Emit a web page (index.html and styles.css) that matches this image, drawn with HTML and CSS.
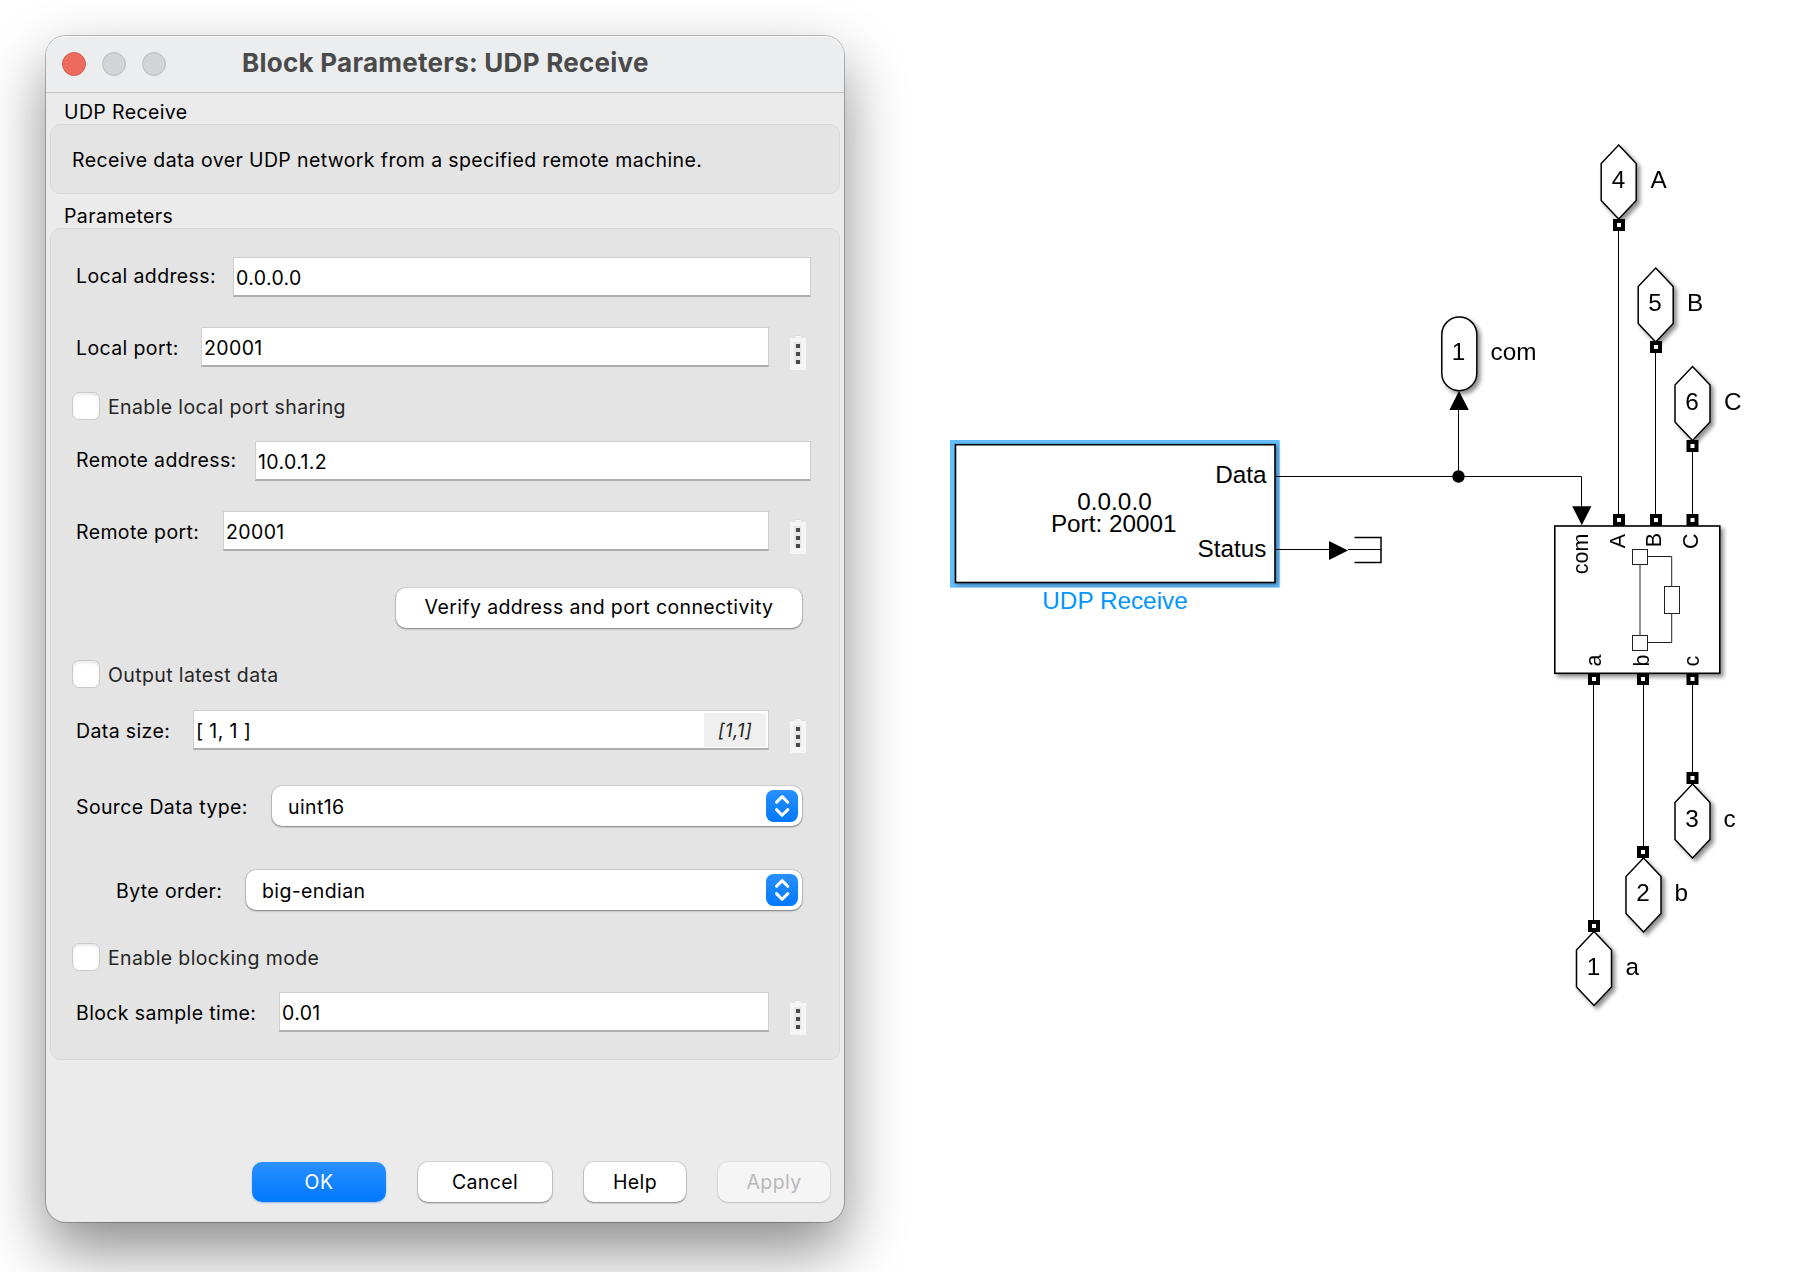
FILE: index.html
```html
<!DOCTYPE html>
<html lang="en">
<head>
<meta charset="utf-8">
<title>Block Parameters: UDP Receive</title>
<link rel="stylesheet" href="styles.css">
</head>
<body>
<svg class="defs" width="0" height="0" aria-hidden="true">
  <defs>
    <linearGradient id="blue" x1="0" y1="0" x2="0" y2="1">
      <stop offset="0" stop-color="#2a90ff"/><stop offset="1" stop-color="#0078ff"/>
    </linearGradient>
    <symbol id="stepper" viewBox="0 0 32 32">
      <rect width="32" height="32" rx="7.5" fill="url(#blue)"/>
      <path d="M10.5 12.3 16.1 6.6l5.7 5.7M10.5 19.6l5.6 5.7 5.7-5.7" fill="none" stroke="#fff" stroke-width="3" stroke-linecap="round" stroke-linejoin="round"/>
    </symbol>
    <symbol id="dots" viewBox="0 0 16 35">
      <path d="M3.5 3Q4.500 .7 6 .7h4Q11.500 .7 12.500 3z" fill="#fff" stroke="#ccc" stroke-width=".6"/>
      <rect y="3" width="16" height="32" fill="#f5f5f5"/>
      <path d="M4 7h7.500v22H4z" fill="#e6e6e6"/>
      <path d="M6 9h4v4H6zM6 17h4v4H6zM6 25h4v4H6z" fill="#474747"/>
    </symbol>
  </defs>
</svg>
<main class="desk">
  <section class="dialog">
    <header class="titlebar">
      <span class="light close"></span><span class="light"></span><span class="light"></span>
      <h1>Block Parameters: UDP Receive</h1>
    </header>
    <h2 class="heading first">UDP Receive</h2>
    <div class="group intro">Receive data over UDP network from a specified remote machine.</div>
    <h2 class="heading second">Parameters</h2>
    <div class="group params">
      <div class="row wide raised local-address"><label>Local address:</label><div class="input">0.0.0.0</div></div>
      <div class="row local-port"><label>Local port:</label><div class="input">20001</div><svg class="more"><use href="#dots"/></svg></div>
      <div class="check sharing"><span class="box"></span>Enable local port sharing</div>
      <div class="row wide raised remote-address"><label>Remote address:</label><div class="input">10.0.1.2</div></div>
      <div class="row remote-port"><label>Remote port:</label><div class="input">20001</div><svg class="more"><use href="#dots"/></svg></div>
      <div class="verify"><button class="button">Verify address and port connectivity</button></div>
      <div class="check latest"><span class="box"></span>Output latest data</div>
      <div class="row data-size"><label>Data size:</label><div class="input"><span>[ 1, 1 ]</span><em class="result">[1,1]</em></div><svg class="more"><use href="#dots"/></svg></div>
      <div class="row choice data-type"><label>Source Data type:</label><div class="select">uint16<svg><use href="#stepper"/></svg></div></div>
      <div class="row choice byte-order"><label>Byte order:</label><div class="select">big-endian<svg><use href="#stepper"/></svg></div></div>
      <div class="check blocking"><span class="box"></span>Enable blocking mode</div>
      <div class="row sample-time"><label>Block sample time:</label><div class="input">0.01</div><svg class="more"><use href="#dots"/></svg></div>
    </div>
    <footer class="actions">
      <button class="button primary">OK</button>
      <button class="button cancel">Cancel</button>
      <button class="button help">Help</button>
      <button class="button apply" disabled>Apply</button>
    </footer>
  </section>

  <svg class="diagram" viewBox="900 0 902 1272">
    <defs>
      <filter id="drop" x="-20%" y="-20%" width="150%" height="150%">
        <feDropShadow dx="3" dy="3" stdDeviation="2" flood-color="#000" flood-opacity=".45"/>
      </filter>
      <filter id="soft" x="-5%" y="-5%" width="110%" height="110%">
        <feDropShadow dx="2" dy="2" stdDeviation="2" flood-color="#000" flood-opacity=".35"/>
      </filter>
      <path id="hex" d="M0 .5 17.500 19v37L0 74.500-17.500 56V19z"/>
      <g id="port"><rect x="-6" y="-6" width="12" height="12" fill="#000"/><rect x="-2" y="-2" width="4" height="4" fill="#fff"/></g>
    </defs>

    <rect x="950" y="440" width="329.700" height="147.600" fill="#62bdff"/>
    <rect class="block" x="955.500" y="444.700" width="319.500" height="137.800" filter="url(#soft)"/>

    <g class="wire">
      <path d="M1276 476.500H1581.500V508M1458.500 476.500V408M1276 549.500H1330"/>
      <path d="M1618.500 231V516M1655.500 353V516M1692.500 452V516"/>
      <path d="M1593.500 683V922M1643.500 683V848M1692.500 683V774"/>
    </g>
    <circle cx="1458.500" cy="476.500" r="6.200"/>
    <path d="M1459 391l9.800 19h-19.400zM1572.200 506.200h19.200l-9.600 19zM1329 541v19l19-9.500z"/>
    <path class="terminator" d="M1354.500 537.500H1381V562.500H1354.500"/>
    <path class="wire" d="M1348 549.500H1381"/>

    <g class="label">
      <text x="1266.500" y="483" text-anchor="end">Data</text>
      <text x="1114.500" y="510" text-anchor="middle">0.0.0.0<tspan x="1113.700" y="532">Port: 20001</tspan></text>
      <text x="1266.500" y="557" text-anchor="end">Status</text>
      <text class="selected" x="1115" y="609" text-anchor="middle">UDP Receive</text>
    </g>

    <rect class="shape" x="1441.800" y="317" width="35" height="73.700" rx="17.500" filter="url(#drop)"/>
    <rect class="block" x="1554.800" y="526" width="165" height="147.300" filter="url(#drop)"/>
    <g class="mask">
      <path d="M1640 564V636M1647 556.500H1671.700V587M1671.700 613V642.500H1647"/>
      <rect x="1632.500" y="549.500" width="15" height="15"/>
      <rect x="1632.500" y="635.500" width="15" height="15"/>
      <rect x="1664.500" y="586.500" width="15" height="27"/>
    </g>

    <g class="shape" filter="url(#drop)">
      <use href="#hex" x="1618.700" y="144.500"/>
      <use href="#hex" x="1655.700" y="267.500"/>
      <use href="#hex" x="1692.500" y="366"/>
      <use href="#hex" x="1692.500" y="783.500"/>
      <use href="#hex" x="1643.500" y="857.500"/>
      <use href="#hex" x="1594" y="931"/>
    </g>
    <use href="#port" x="1619" y="225"/>
    <use href="#port" x="1656" y="347"/>
    <use href="#port" x="1692.500" y="446"/>
    <use href="#port" x="1619" y="520"/>
    <use href="#port" x="1656" y="520"/>
    <use href="#port" x="1692.500" y="520"/>
    <use href="#port" x="1594" y="679"/>
    <use href="#port" x="1643" y="679"/>
    <use href="#port" x="1692.500" y="679"/>
    <use href="#port" x="1692.500" y="778"/>
    <use href="#port" x="1643" y="852"/>
    <use href="#port" x="1594" y="926"/>

    <g class="label number">
      <text x="1458.500" y="360">1</text>
      <text x="1618.500" y="188">4</text>
      <text x="1655" y="311">5</text>
      <text x="1692" y="409.500">6</text>
      <text x="1692" y="827">3</text>
      <text x="1643" y="901">2</text>
      <text x="1593.500" y="974.500">1</text>
    </g>
    <g class="label">
      <text x="1490.500" y="360">com</text>
      <text x="1650.500" y="188">A</text>
      <text x="1687" y="311">B</text>
      <text x="1724" y="409.500">C</text>
      <text x="1723.500" y="827">c</text>
      <text x="1674.500" y="901">b</text>
      <text x="1625.500" y="975">a</text>
    </g>
    <g class="pin">
      <text transform="translate(1587.500 533.500) rotate(-90)" text-anchor="end">com</text>
      <text transform="translate(1625 534) rotate(-90)" text-anchor="end">A</text>
      <text transform="translate(1661 533) rotate(-90)" text-anchor="end">B</text>
      <text transform="translate(1698 533.500) rotate(-90)" text-anchor="end">C</text>
      <text transform="translate(1600.500 666.500) rotate(-90)">a</text>
      <text transform="translate(1648.800 666.500) rotate(-90)">b</text>
      <text transform="translate(1698.500 666.500) rotate(-90)">c</text>
    </g>
  </svg>
</main>
</body>
</html>
```
FILE: styles.css
```css
* { box-sizing: border-box; }

body {
  margin: 0;
  background: #fff;
  color: #000;
  font: 19.5px/24px Inter, "Liberation Sans", sans-serif;
  letter-spacing: 0.38px;
}

.defs { position: absolute; }

.desk {
  display: flex;
  width: 1802px;
  height: 1272px;
  overflow: hidden;
}

.dialog {
  display: flex;
  flex-direction: column;
  flex: none;
  width: 798px;
  height: 1186px;
  margin: 36px 56px 0 46px;
  border-radius: 20px;
  background: #ebebeb;
  box-shadow: 0 0 0 1px rgba(0, 0, 0, .25), 0 28px 62px rgba(0, 0, 0, .46);
}

.diagram {
  flex: none;
  width: 902px;
  height: 1272px;
}

.titlebar {
  display: flex;
  align-items: center;
  gap: 16px;
  flex: none;
  height: 57px;
  padding: 0 16px;
  border-bottom: 1px solid #c4c4c4;
  border-radius: 20px 20px 0 0;
  background: #ecedef;
  box-shadow: inset 0 1px #f8f8f8;
}

.light {
  width: 24px;
  height: 24px;
  border: 1px solid #bcbdbf;
  border-radius: 50%;
  background: #d3d4d6;
}

.close { border-color: #dc5a50; background: #ed6a5e; }

h1 {
  margin: 0 0 3px 60px;
  color: #4a4a4a;
  font-size: 26px;
  font-weight: 700;
  line-height: 32px;
  letter-spacing: 0.26px;
  white-space: nowrap;
}

.heading {
  flex: none;
  height: 24px;
  margin: 0 18px;
  font-size: inherit;
  font-weight: 400;
}

.first { margin-top: 7px; }
.second { margin-top: 10px; }

.group {
  flex: none;
  margin: 0 4px;
  border: 1px solid #d9d9d9;
  border-radius: 10px;
  background: #e4e4e4;
}

.intro { height: 70px; padding: 23px 21px; }

.params {
  display: flex;
  flex-direction: column;
  height: 832px;
  padding: 28px 28px 0 21px;
}

.row { position: relative; display: flex; height: 40px; line-height: 40px; margin-right: 42px; }
.row label { flex: none; padding: 1px 0 0 4px; white-space: nowrap; }
.raised label { line-height: 38px; padding-top: 0; }
.wide { margin-right: 0; }
.choice { margin-right: 9px; }

.input {
  display: flex;
  justify-content: space-between;
  flex: 1;
  padding: 0 2px;
  border: 1px solid #cecece;
  border-bottom: 2px solid #aeaeae;
  background: #fff;
}

.more {
  position: absolute;
  top: 8px;
  right: -37px;
  width: 16px;
  height: 35px;
}

.local-address label { width: 161px; }
.local-port { margin-top: 30px; }
.local-port label { width: 129px; }
.sharing { margin-top: 25px; }
.remote-address { margin-top: 21px; }
.remote-address label { width: 183px; }
.remote-port { margin-top: 30px; }
.remote-port label { width: 151px; }
.latest { margin-top: 31px; }
.data-size { margin-top: 22px; }
.data-size label { width: 121px; }
.data-type { margin-top: 36px; }
.data-type label { width: 200px; }
.byte-order { margin-top: 44px; }
.byte-order label { width: 174px; padding-left: 44px; }
.blocking { margin-top: 33px; }
.sample-time { margin-top: 21px; }
.sample-time label { width: 207px; }

.result {
  width: 62px;
  height: 34px;
  margin: 2px 0 0;
  background: #efefef;
  color: #262626;
  font-size: 18.500px;
  line-height: 34px;
  text-align: center;
}

.check {
  display: flex;
  gap: 8px;
  height: 28px;
  color: #262626;
  line-height: 30px;
}

.box {
  width: 28px;
  height: 28px;
  border: 1px solid #cacaca;
  border-radius: 7px;
  background: #fff;
  box-shadow: inset 0 2px 3px rgba(0, 0, 0, .09);
}

.select {
  display: flex;
  justify-content: space-between;
  flex: 1;
  height: 40px;
  padding: 1px 4px 0 16px;
  border-radius: 10px;
  background: #fff;
  box-shadow: 0 0 0 1px rgba(0, 0, 0, .09), 0 1px 2px rgba(0, 0, 0, .4);
}

.select svg { width: 32px; height: 32px; margin-top: 3px; }

.button {
  height: 40px;
  padding: 0 0 1px;
  border: 0;
  border-radius: 10px;
  background: #fff;
  box-shadow: 0 0 0 1px rgba(0, 0, 0, .08), 0 1px 2px rgba(0, 0, 0, .4);
  color: #000;
  font: inherit;
  letter-spacing: inherit;
}

.verify {
  display: flex;
  justify-content: flex-end;
  height: 41px;
  margin: 37px 9px 0 0;
}

.verify .button { width: 406px; padding-bottom: 2px; }

.actions {
  display: flex;
  justify-content: flex-end;
  gap: 32px;
  margin: auto 14px 20px 0;
}

.primary {
  width: 134px;
  background: linear-gradient(#2a90ff, #0078ff);
  box-shadow: 0 1px 2px rgba(0, 100, 230, .35);
  color: #fff;
}

.cancel { width: 134px; }
.help { width: 102px; }

.apply {
  width: 112px;
  background: #f5f5f5;
  box-shadow: 0 0 0 1px rgba(0, 0, 0, .04), 0 1px 2px rgba(0, 0, 0, .15);
  color: #b8b8b8;
}

.wire { fill: none; stroke: #000; stroke-width: 1; }
.terminator { fill: none; stroke: #000; stroke-width: 1.500; }
.block { fill: #fff; stroke: #000; stroke-width: 1.600; }
.shape { fill: #fff; stroke: #000; stroke-width: 1.500; }
.mask { fill: #fff; stroke: #222; stroke-width: 1; }
.label { font: 24.300px "Liberation Sans", Arial, sans-serif; letter-spacing: 0; }
.number { text-anchor: middle; }
.selected { fill: #0095ff; }
.pin { font: 21.500px "Liberation Sans", Arial, sans-serif; letter-spacing: 0; }
```
